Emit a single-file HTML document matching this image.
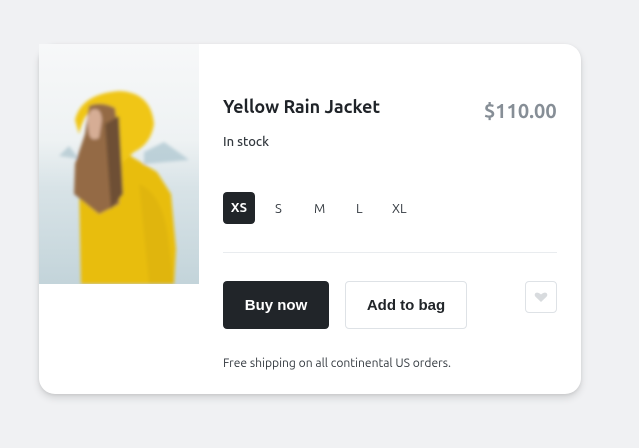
<!DOCTYPE html>
<html><head><meta charset="utf-8"><style>
*{box-sizing:border-box;margin:0;padding:0}
body{width:639px;height:448px;background:#f0f1f3;font-family:"Ubuntu","Liberation Sans",sans-serif;position:relative;overflow:hidden}
.card{position:absolute;left:39px;top:44px;width:542px;height:350px;background:#fff;border-radius:16px;box-shadow:0 4px 8px rgba(0,0,0,.12),0 1px 3px rgba(0,0,0,.08)}
.img{position:absolute;left:39px;top:44px;width:160px;height:240px}
.t{position:absolute;color:#1f2328}
</style></head><body>
<div class="card"></div>
<svg class="img" width="160" height="240" viewBox="0 0 160 240">
<defs><linearGradient id="bg" x1="0" y1="0" x2="0" y2="1">
<stop offset="0" stop-color="#f7f8f9"/><stop offset=".4" stop-color="#eef2f3"/><stop offset=".6" stop-color="#d8e3e7"/><stop offset="1" stop-color="#c3d4da"/></linearGradient>
<filter id="b"><feGaussianBlur stdDeviation="1.5"/></filter></defs>
<rect width="160" height="240" fill="url(#bg)"/>
<g filter="url(#b)">
<path d="M105 108 L125 98 L142 110 L150 116 L105 120Z" fill="#a9c5cf" opacity=".7"/>
<path d="M20 112 L30 102 L40 115Z" fill="#bdd0d7"/>
<path d="M42 240 L40 140 L50 118 L85 108 L118 128 L132 150 L137 205 L135 240Z" fill="#e8bd10"/>
<path d="M36 76 Q42 50 80 47 Q112 48 115 80 Q112 100 95 108 L82 120 L72 100 L62 62 Q46 64 40 90Z" fill="#f0c617"/>
<path d="M50 62 Q62 57 76 64 L82 110 L80 160 L60 170 L35 150 L36 120 L46 90Z" fill="#946b45"/>
<path d="M52 66 Q62 62 63 76 L60 94 Q52 98 50 90 L48 74Z" fill="#d6ad95"/>
<path d="M66 80 L80 72 L84 150 L72 165Z" fill="#6e5036"/>
<path d="M100 140 Q125 150 130 200 L135 240 L110 240Z" fill="#d8ad0c" opacity=".5"/>
</g>
</svg>
<div class="t" style="left:223px;top:97px;font-size:18px;font-weight:bold">Yellow Rain Jacket</div>
<div class="t" style="left:484px;top:99px;font-size:20px;font-weight:bold;color:#868e96">$110.00</div>
<div class="t" style="left:223px;top:135px;font-size:13px;font-weight:500;color:#343a40">In stock</div>
<div style="position:absolute;left:223px;top:192px;width:32px;height:32px;background:#212529;border-radius:4px;color:#fff;font-size:13px;font-weight:bold;text-align:center;line-height:33px">XS</div>
<div class="t" style="left:275px;top:202px;font-size:13px;color:#343a40">S</div>
<div class="t" style="left:314px;top:202px;font-size:13px;color:#343a40">M</div>
<div class="t" style="left:356px;top:202px;font-size:13px;color:#343a40">L</div>
<div class="t" style="left:392px;top:202px;font-size:13px;color:#343a40">XL</div>
<div style="position:absolute;left:223px;top:252px;width:334px;height:1px;background:#e9ecef"></div>
<div style="position:absolute;left:223px;top:281px;width:106px;height:48px;background:#212529;border-radius:4px;color:#fff;font:bold 15px 'Liberation Sans',sans-serif;text-align:center;line-height:49px">Buy now</div>
<div style="position:absolute;left:345px;top:281px;width:122px;height:48px;border:1px solid #dee2e6;border-radius:4px;color:#212529;font:bold 15px 'Liberation Sans',sans-serif;text-align:center;line-height:47px">Add to bag</div>
<div style="position:absolute;left:525px;top:281px;width:32px;height:32px;border:1px solid #dee2e6;border-radius:4px">
<svg width="30" height="30" viewBox="0 0 30 30" style="position:absolute;left:0;top:0"><path d="M15 20 L9.5 14.8 Q8 13 9.3 11.3 Q11.5 9.5 15 12.5 Q18.5 9.5 20.7 11.3 Q22 13 20.5 14.8Z" fill="#d8dbde"/></svg></div>
<div class="t" style="left:223px;top:357px;font-size:12.1px;color:#343a40">Free shipping on all continental US orders.</div>
</body></html>
